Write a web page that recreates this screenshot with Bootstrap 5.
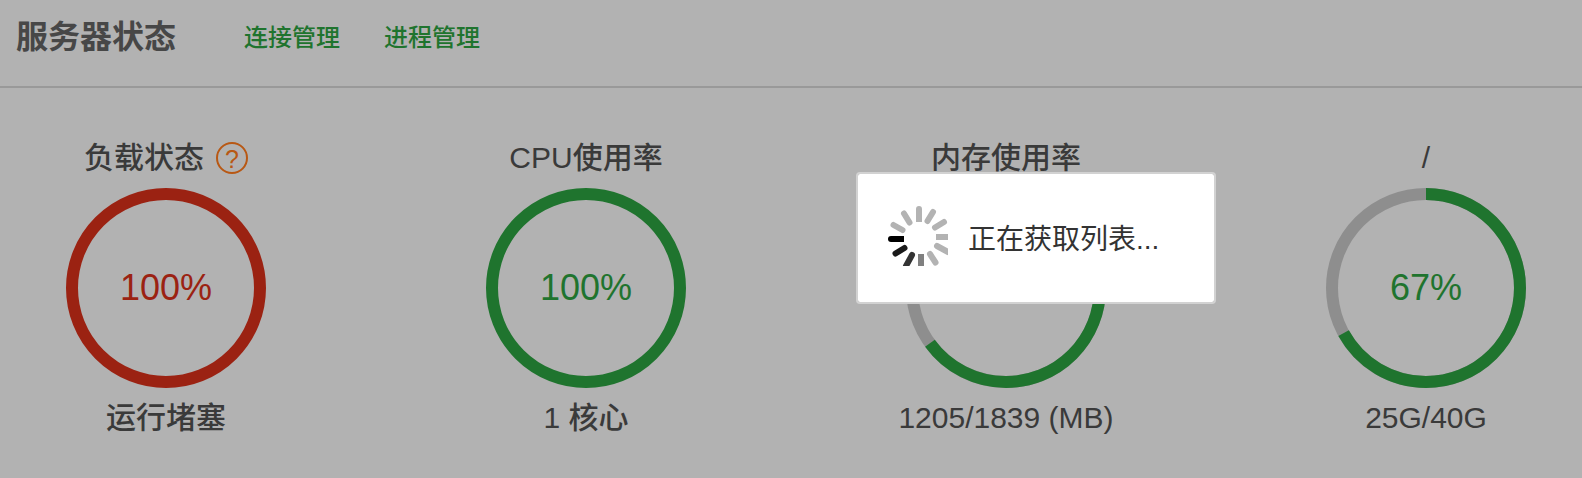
<!DOCTYPE html>
<html lang="zh-CN">
<head>
<meta charset="utf-8">
<meta name="viewport" content="width=device-width, initial-scale=1">
<title>服务器状态</title>
<link href="https://cdn.jsdelivr.net/npm/bootstrap@5.3.0/dist/css/bootstrap.min.css" rel="stylesheet">
<style>
  body { background: #b2b2b2; color: #3a3a3a; font-family: "Liberation Sans", "Noto Sans CJK SC", sans-serif; }
  .status-head { padding: 0 16px; height: 88px; padding-bottom: 12px; border-bottom: 2px solid #999; }
  .status-head h1 { font-size: 32px; line-height: 40px; font-weight: 700; color: #474747; margin-right: 68px; }
  .status-head nav { gap: 44px; padding-top: 2px; }
  .status-head a { font-size: 24px; line-height: 32px; font-weight: 500; color: #1f742e; }
  .gauges { padding: 54px 46px 40px 56px; }
  .gauge { width: 220px; }
  .gauge-title, .gauge-note { font-size: 30px; font-weight: 500; white-space: nowrap; }
  .gauge-title { line-height: 32px; height: 32px; margin-bottom: 14px; gap: 12px; }
  .gauge-note { line-height: 36px; margin-top: 12px; }
  .help { width: 32px; height: 32px; border: 2px solid #b85814; color: #b85814; font-size: 25px; line-height: 30px; }
  .ring { display: block; width: 200px; height: 200px; }
  .ring circle { fill: none; stroke-width: 12; }
  .ring .track { stroke: #8e8e8e; }
  .ring .fill { stroke: currentColor; }
  .ring text { fill: currentColor; font-size: 36px; text-anchor: middle; }
  .ok { color: #1f742e; }
  .full { color: #9b2212; }
  .loading { left: 856px; top: 172px; width: 360px; height: 132px; padding: 32px 30px 0; gap: 20px; background: #fff; background-clip: padding-box; border: 2px solid #d2d2d2; border-radius: 4px; color: #333; font-size: 28px; line-height: 68px; white-space: nowrap; }
</style>
</head>
<body>
<header class="status-head d-flex align-items-center">
  <h1 class="mb-0">服务器状态</h1>
  <nav class="d-flex">
    <a class="text-decoration-none" href="#">连接管理</a>
    <a class="text-decoration-none" href="#">进程管理</a>
  </nav>
</header>

<main class="gauges d-flex justify-content-between">
  <section class="gauge d-flex flex-column align-items-center">
    <div class="gauge-title d-flex align-items-center">负载状态 <a class="help rounded-circle text-center text-decoration-none fw-normal" href="#">?</a></div>
    <svg class="ring full" viewBox="0 0 200 200">
      <circle class="fill" cx="100" cy="100" r="94"/>
      <text x="100" y="112">100%</text>
    </svg>
    <div class="gauge-note">运行堵塞</div>
  </section>
  <section class="gauge d-flex flex-column align-items-center">
    <div class="gauge-title">CPU使用率</div>
    <svg class="ring ok" viewBox="0 0 200 200">
      <circle class="fill" cx="100" cy="100" r="94"/>
      <text x="100" y="112">100%</text>
    </svg>
    <div class="gauge-note">1 核心</div>
  </section>
  <section class="gauge d-flex flex-column align-items-center">
    <div class="gauge-title">内存使用率</div>
    <svg class="ring ok" viewBox="0 0 200 200">
      <circle class="track" cx="100" cy="100" r="94"/>
      <circle class="fill" cx="100" cy="100" r="94" pathLength="100" stroke-dasharray="65 35" transform="rotate(-90 100 100)"/>
    </svg>
    <div class="gauge-note">1205/1839 (MB)</div>
  </section>
  <section class="gauge d-flex flex-column align-items-center">
    <div class="gauge-title">/</div>
    <svg class="ring ok" viewBox="0 0 200 200">
      <circle class="track" cx="100" cy="100" r="94"/>
      <circle class="fill" cx="100" cy="100" r="94" pathLength="100" stroke-dasharray="67 33" transform="rotate(-90 100 100)"/>
      <text x="100" y="112">67%</text>
    </svg>
    <div class="gauge-note">25G/40G</div>
  </section>
</main>

<div class="loading position-absolute d-flex align-items-start" role="status">
  <svg width="60" height="60" viewBox="0 0 60 60" fill="none" stroke="#b3b3b3" stroke-width="6" stroke-linecap="round">
    <path d="M31 3V13M45 6L39.500 15M56 16L47 21.500M49 40L60 46M42 48L47.500 56.500M14.500 24L5.500 19M21.500 16.500L16 7.500"/>
    <path d="M31 8V16M48 31H60" stroke-linecap="butt"/>
    <path d="M33 48V60" stroke="#808080" stroke-linecap="butt"/>
    <path d="M24 49L18 60" stroke="#333"/>
    <path d="M16.500 42L7.500 47.500" stroke="#1a1a1a"/>
    <path d="M3 33H13" stroke="#000"/>
    <path d="M8 33H16" stroke="#000" stroke-linecap="butt"/>
  </svg>
  <span>正在获取列表...</span>
</div>
<script src="https://cdn.jsdelivr.net/npm/bootstrap@5.3.0/dist/js/bootstrap.bundle.min.js"></script>
</body>
</html>
